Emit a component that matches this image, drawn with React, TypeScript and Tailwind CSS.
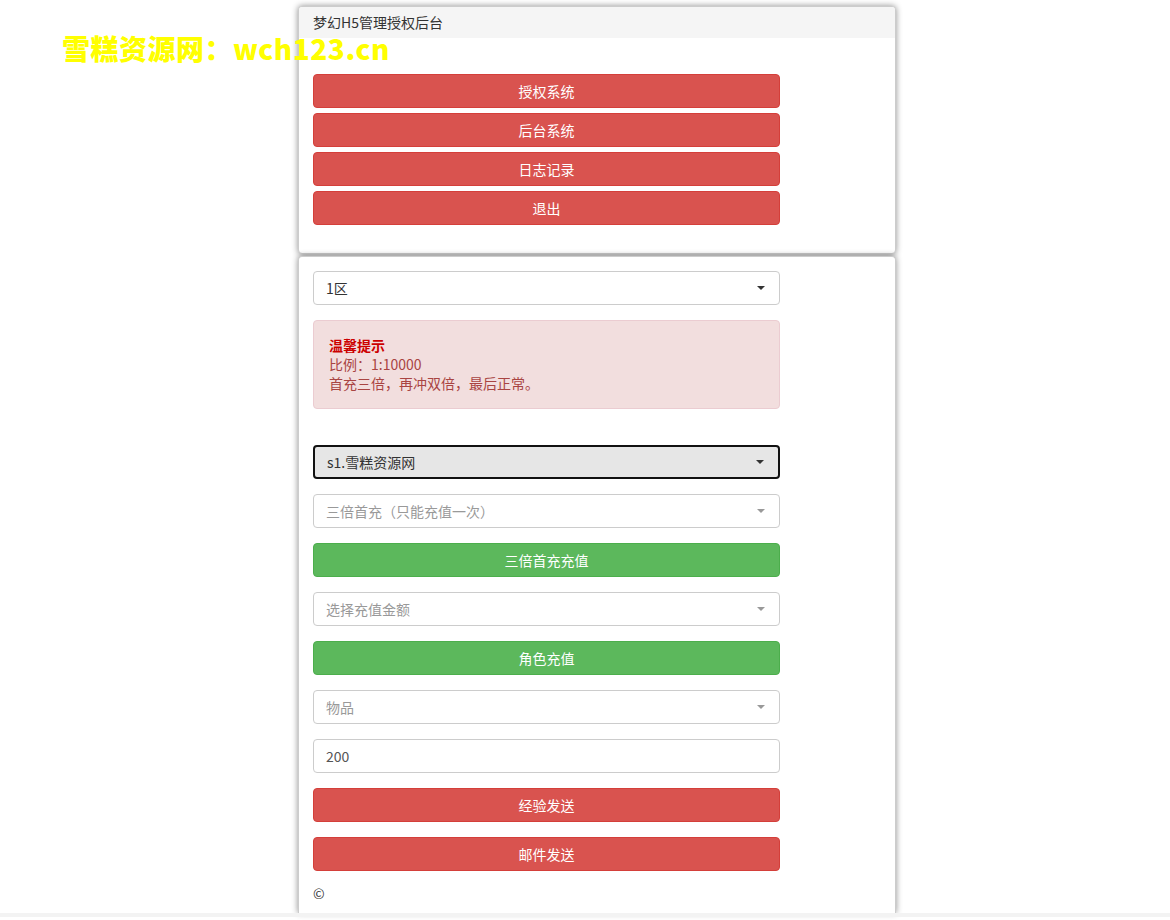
const font = { fontFamily: '"Noto Sans CJK SC", "Liberation Sans", sans-serif' };

const Arrow = ({ muted }: { muted?: boolean }) => (
  <span
    className={`w-0 h-0 border-l-[4px] border-r-[4px] border-t-[4px] border-l-transparent border-r-transparent ${
      muted ? "border-t-[#999]" : "border-t-[#333]"
    }`}
  />
);

const Select = ({ label, muted, focused }: { label: string; muted?: boolean; focused?: boolean }) => (
  <div
    className={`h-[34px] w-[467px] rounded-[4px] flex items-center justify-between pl-[12px] pr-[14px] text-[14px] ${
      focused
        ? "border-2 border-[#111] bg-[#e6e6e6] text-[#333] pl-[11px]"
        : "border border-[#ccc] bg-white"
    } ${muted ? "text-[#999]" : "text-[#333]"}`}
  >
    <span>{label}</span>
    <Arrow muted={muted} />
  </div>
);

const Btn = ({ label, green }: { label: string; green?: boolean }) => (
  <button
    className={`h-[34px] w-[467px] rounded-[4px] text-white text-[14px] flex items-center justify-center border ${
      green ? "bg-[#5cb85c] border-[#4cae4c]" : "bg-[#d9534f] border-[#d43f3a]"
    }`}
  >
    {label}
  </button>
);

export default function App() {
  return (
    <div className="relative min-h-[920px] bg-white text-[#333]" style={font}>
      <div
        className="absolute left-[62px] top-[30px] z-10 text-[28px] font-black text-[#ffff00] leading-[36px] tracking-[0.5px]"
        style={font}
      >
        雪糕资源网：wch123.cn
      </div>

      <div className="ml-[298px] w-[598px] pt-[6px]">
        <div className="rounded-[4px] border border-[#ccc] shadow-[0_0_6px_rgba(0,0,0,0.45)] bg-white overflow-hidden">
          <div className="h-[31px] bg-[#f5f5f5] px-[14px] flex items-center text-[14px] text-[#333]">
            梦幻H5管理授权后台
          </div>
          <div className="px-[14px] pt-[36px] pb-[28px] flex flex-col gap-[5px]">
            <Btn label="授权系统" />
            <Btn label="后台系统" />
            <Btn label="日志记录" />
            <Btn label="退出" />
          </div>
        </div>

        <div className="mt-[2px] rounded-t-[4px] border border-b-0 border-[#ccc] shadow-[0_0_6px_rgba(0,0,0,0.45)] bg-white px-[14px] pt-[14px] pb-[10px]">
          <Select label="1区" />
          <div className="mt-[15px] w-[467px] h-[89px] rounded-[4px] border border-[#ebccd1] bg-[#f2dede] text-[#a94442] px-[15px] pt-[15px] text-[14px] leading-[19px]">
            <div className="font-bold text-[#cc0000]">温馨提示</div>
            <div>比例：1:10000</div>
            <div>首充三倍，再冲双倍，最后正常。</div>
          </div>
          <div className="mt-[36px] flex flex-col gap-[15px]">
            <Select label="s1.雪糕资源网" focused />
            <Select label="三倍首充（只能充值一次）" muted />
            <Btn label="三倍首充充值" green />
            <Select label="选择充值金额" muted />
            <Btn label="角色充值" green />
            <Select label="物品" muted />
            <div className="h-[34px] w-[467px] rounded-[4px] border border-[#ccc] bg-white flex items-center px-[12px] text-[14px] text-[#555]">
              200
            </div>
            <Btn label="经验发送" />
            <Btn label="邮件发送" />
          </div>
          <div className="mt-[12px] h-[20px] text-[14px] leading-[20px]">©</div>
        </div>
      </div>
      <div className="h-[4px] bg-[#f3f3f3]" />
      <div className="h-[40px]" />
    </div>
  );
}
